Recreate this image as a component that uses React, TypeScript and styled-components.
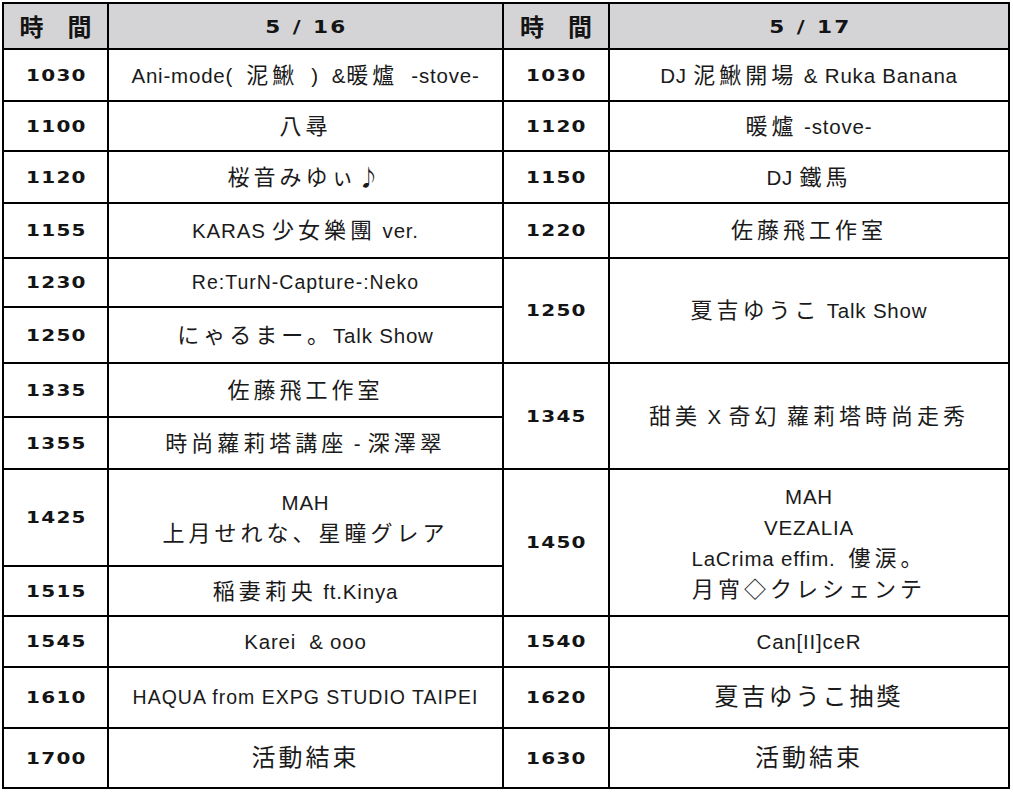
import React from "react";
import styled, { createGlobalStyle } from "styled-components";

const Global = createGlobalStyle`
  html, body { margin: 0; padding: 0; background: #ffffff; }
  body { font-family: "Liberation Sans", "Noto Sans CJK JP", sans-serif; }
`;

const Page = styled.div`
  padding: 2px 0 0 2px;
`;

const Grid = styled.div`
  display: grid;
  width: max-content;
  grid-template-columns: 103px 393px 104px 398px;
  grid-template-rows: 44px 50px 48px 50px 53px 47px 54px 52px 50px 95px 48px 49px 59px 58px;
  gap: 2px;
  padding: 2px;
  background: #000000;
`;

const Cell = styled.div<{ $rows?: number; $head?: boolean }>`
  grid-row: span ${(p) => p.$rows ?? 1};
  background: ${(p) => (p.$head ? "#d4d4d6" : "#ffffff")};
  display: flex;
  flex-direction: column;
  align-items: center;
  justify-content: center;
  text-align: center;
  color: #1c1c1c;
`;

const TimeText = styled.span`
  display: inline-block;
  font-family: "DejaVu Sans", sans-serif;
  font-weight: 700;
  font-size: 16px;
  letter-spacing: 1px;
  padding-left: 1px;
  transform: scaleX(1.25);
  color: #141414;
`;

const HeadTime = styled.span`
  font-family: "Noto Sans CJK JP", sans-serif;
  font-weight: 700;
  font-size: 24px;
  line-height: 1;
  color: #141414;
`;

const HeadDate = styled.span`
  display: inline-block;
  font-family: "DejaVu Sans", sans-serif;
  font-weight: 700;
  font-size: 18px;
  letter-spacing: 2px;
  padding-left: 2px;
  transform: scaleX(1.2);
  color: #141414;
`;

const Act = styled.div<{ $small?: boolean }>`
  font-family: "Liberation Sans", "Noto Sans CJK JP", sans-serif;
  font-size: ${(p) => (p.$small ? "19.5px" : "20.5px")};
  letter-spacing: ${(p) => (p.$small ? "1px" : "0.8px")};
  line-height: 31px;
  white-space: pre-wrap;
  color: #1a1a1a;
`;

const Line = styled.span`
  display: block;
`;

const Cjk = styled.span<{ $large?: boolean }>`
  display: inline-block;
  font-family: "Noto Sans CJK JP", sans-serif;
  font-size: ${(p) => (p.$large ? "24px" : "22px")};
  letter-spacing: ${(p) => (p.$large ? "3px" : "4px")};
  line-height: 26px;
  vertical-align: baseline;
`;

const CJK_RUN = /([\u2600-\u27ff\u25a0-\u25ff\u3000-\u9fff\uff00-\uffef]+)/;

function Mixed({ text, large }: { text: string; large?: boolean }) {
  const lines = text.split("\n");
  return (
    <>
      {lines.map((ln, li) => (
        <Line key={li}>
          {ln.split(CJK_RUN).map((p, i) =>
            i % 2 === 1 ? (
              <Cjk key={i} $large={large}>
                {p}
              </Cjk>
            ) : (
              <React.Fragment key={i}>{p}</React.Fragment>
            )
          )}
        </Line>
      ))}
    </>
  );
}

type Slot = { time: string; act: string; rows?: number; small?: boolean; large?: boolean };

const left: Slot[] = [
  { time: "1030", act: "Ani-mode(  泥鰍  )  &暖爐  -stove-" },
  { time: "1100", act: "八尋" },
  { time: "1120", act: "桜音みゆぃ♪" },
  { time: "1155", act: "KARAS 少女樂團 ver." },
  { time: "1230", act: "Re:TurN-Capture-:Neko", small: true },
  { time: "1250", act: "にゃるまー。Talk Show" },
  { time: "1335", act: "佐藤飛工作室" },
  { time: "1355", act: "時尚蘿莉塔講座 - 深澤翠" },
  { time: "1425", act: "MAH\n上月せれな、星瞳グレア" },
  { time: "1515", act: "稲妻莉央 ft.Kinya" },
  { time: "1545", act: "Karei  & ooo" },
  { time: "1610", act: "HAQUA from EXPG STUDIO TAIPEI", small: true },
  { time: "1700", act: "活動結束", large: true },
];

const right: (Slot | null)[] = [
  { time: "1030", act: "DJ 泥鰍開場 & Ruka Banana" },
  { time: "1120", act: "暖爐 -stove-" },
  { time: "1150", act: "DJ 鐵馬" },
  { time: "1220", act: "佐藤飛工作室" },
  { time: "1250", act: "夏吉ゆうこ Talk Show", rows: 2 },
  null,
  { time: "1345", act: "甜美 X 奇幻 蘿莉塔時尚走秀", rows: 2 },
  null,
  { time: "1450", act: "MAH\nVEZALIA\nLaCrima effim.  僂涙。\n月宵◇クレシェンテ", rows: 2 },
  null,
  { time: "1540", act: "Can[II]ceR" },
  { time: "1620", act: "夏吉ゆうこ抽獎", large: true },
  { time: "1630", act: "活動結束", large: true },
];

export default function App() {
  return (
    <Page>
      <Global />
      <Grid>
        <Cell $head>
          <HeadTime>時　間</HeadTime>
        </Cell>
        <Cell $head>
          <HeadDate>5 / 16</HeadDate>
        </Cell>
        <Cell $head>
          <HeadTime>時　間</HeadTime>
        </Cell>
        <Cell $head>
          <HeadDate>5 / 17</HeadDate>
        </Cell>
        {left.map((l, i) => {
          const r = right[i];
          return (
            <React.Fragment key={l.time + i}>
              <Cell>
                <TimeText>{l.time}</TimeText>
              </Cell>
              <Cell>
                <Act $small={l.small}>
                  <Mixed text={l.act} large={l.large} />
                </Act>
              </Cell>
              {r && (
                <>
                  <Cell $rows={r.rows}>
                    <TimeText>{r.time}</TimeText>
                  </Cell>
                  <Cell $rows={r.rows}>
                    <Act $small={r.small}>
                      <Mixed text={r.act} large={r.large} />
                    </Act>
                  </Cell>
                </>
              )}
            </React.Fragment>
          );
        })}
      </Grid>
    </Page>
  );
}
